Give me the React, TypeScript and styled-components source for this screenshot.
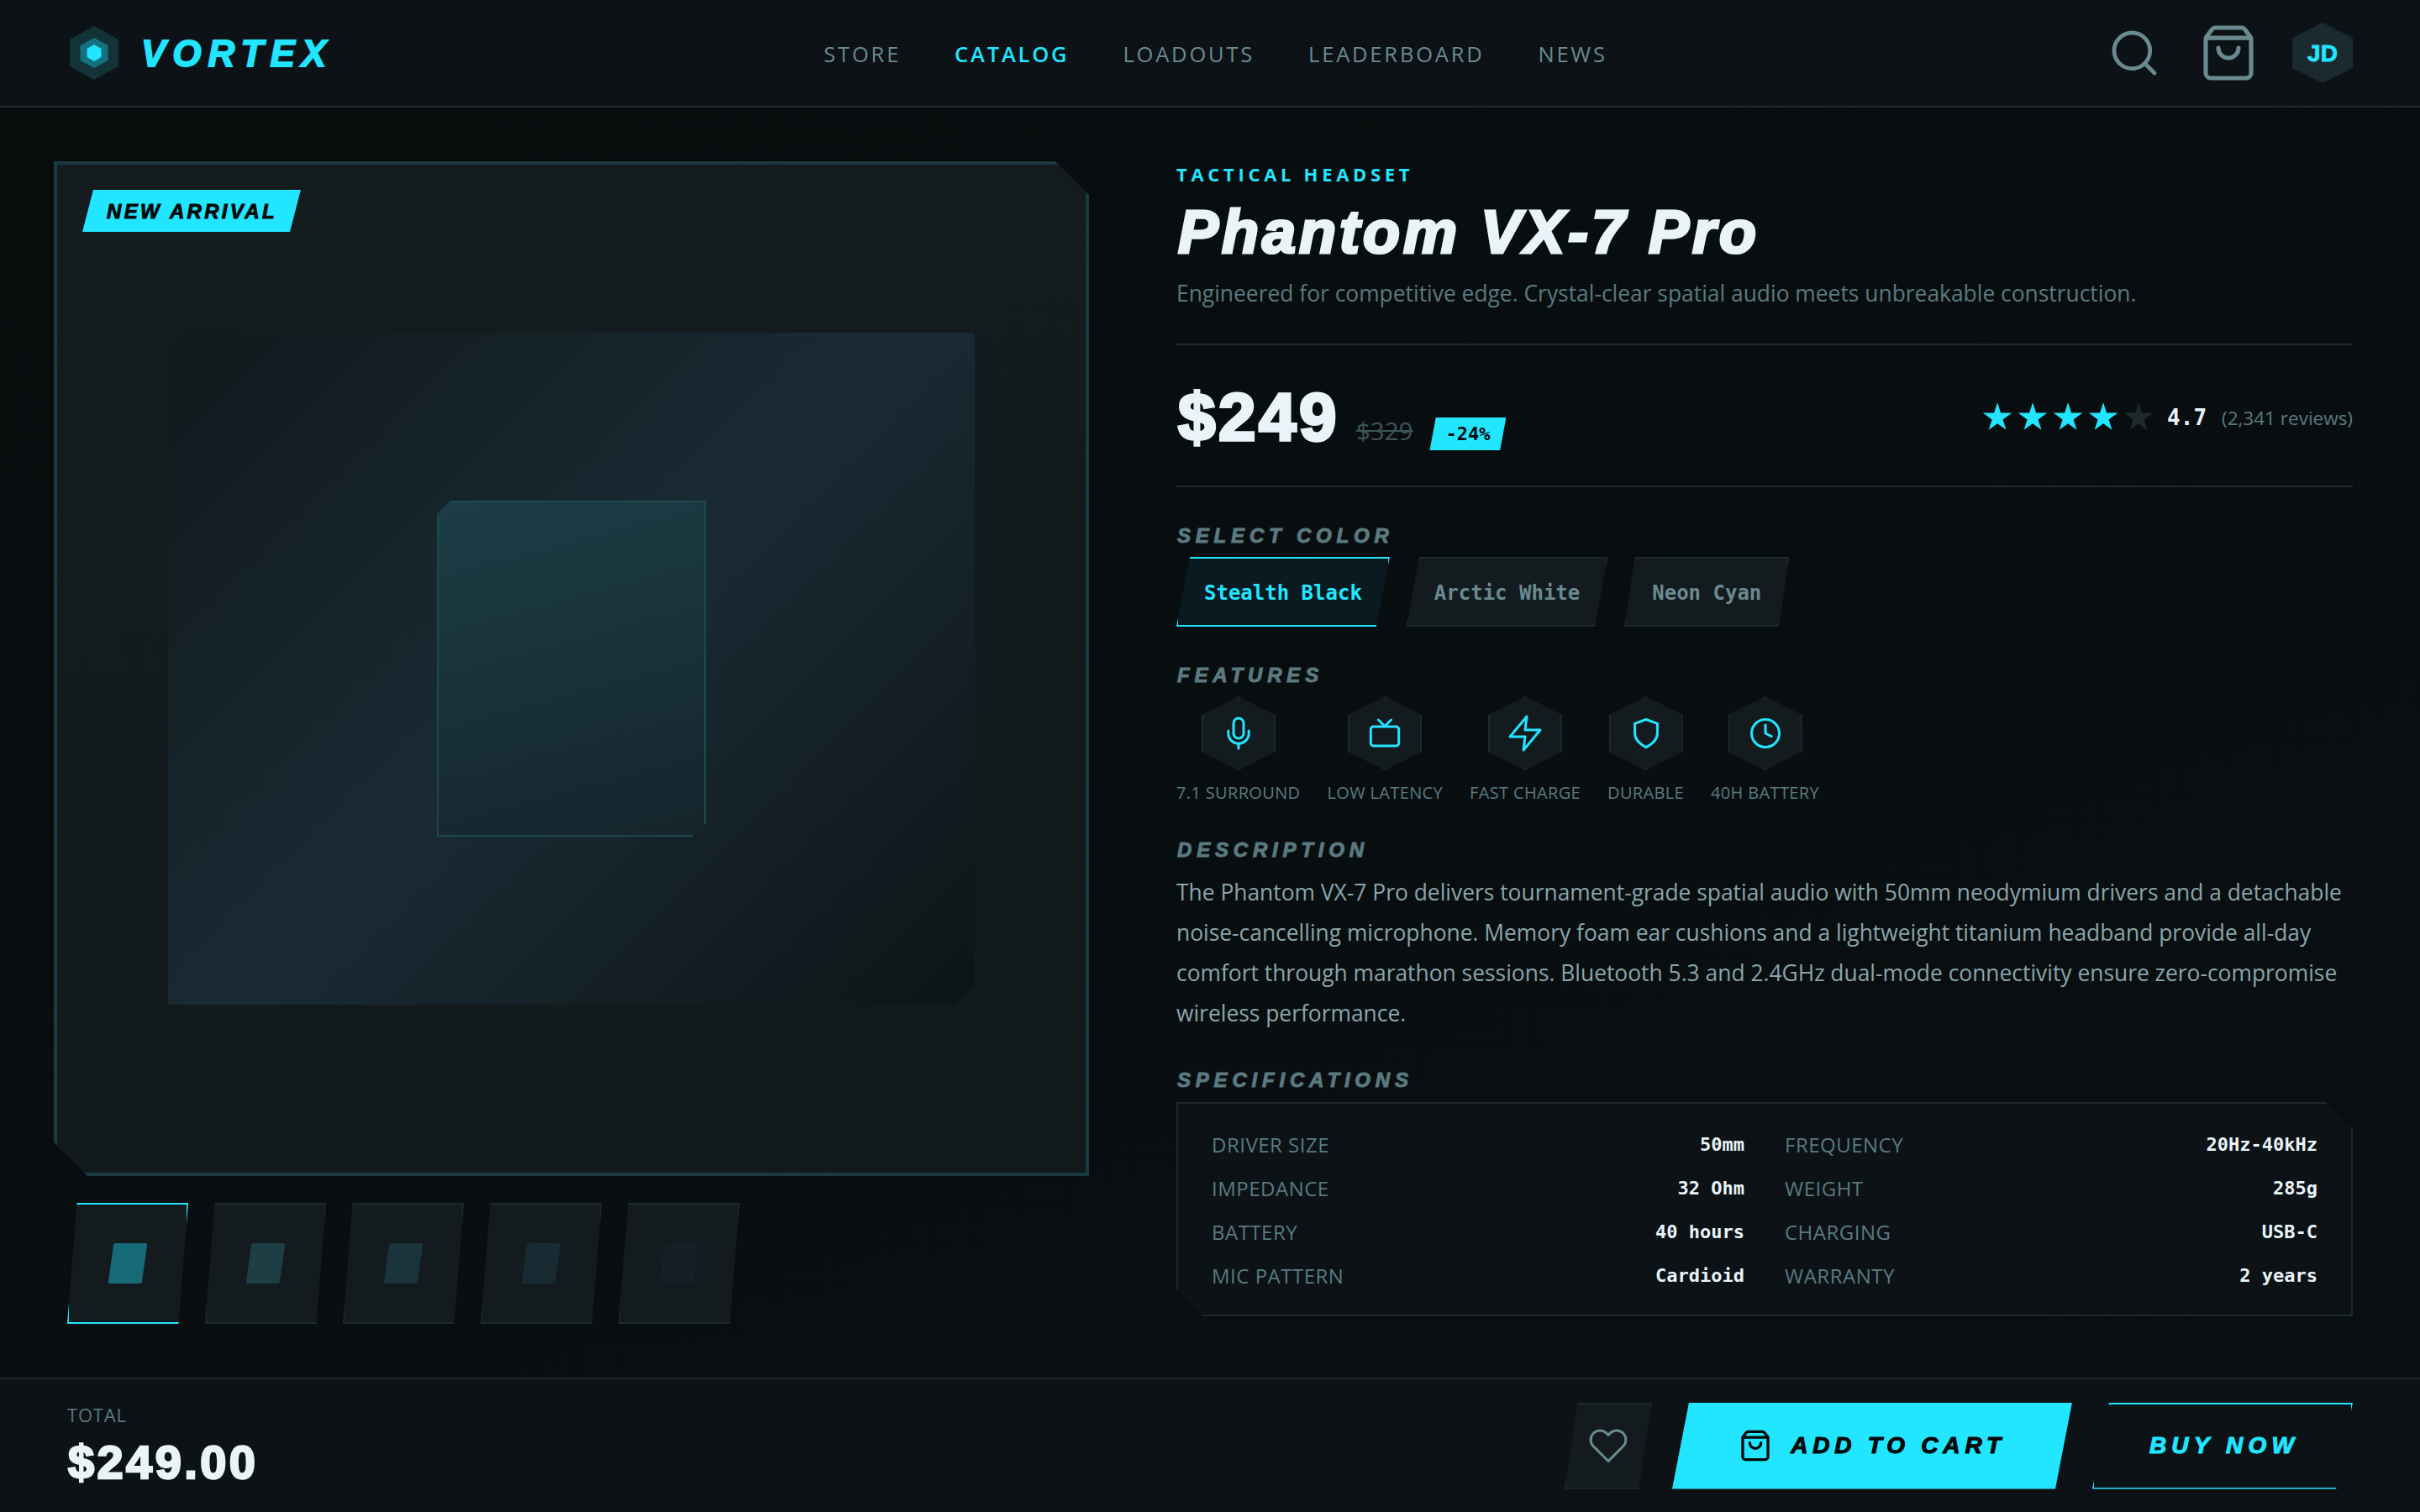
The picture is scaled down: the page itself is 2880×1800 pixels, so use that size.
import React from "react";
import styled, { createGlobalStyle } from "styled-components";
import { Search, ShoppingBag } from "lucide-react";

const CYAN = "#22e5ff";
const LINE = "#1c2a2e";
const MUTED = "#5a7a80";
const WHITE = "#e8f4f8";
const DISPLAY = `"Liberation Sans", Arial, sans-serif`;
const BODY = `"Open Sans", "Noto Sans", sans-serif`;
const MONO = `"DejaVu Sans Mono", "Liberation Mono", monospace`;

const Global = createGlobalStyle`
  * { box-sizing: border-box; }
  html, body { margin: 0; padding: 0; background: #080d0e; }
  body { font-family: ${BODY}; color: ${WHITE}; }
`;

const Page = styled.div`
  width: 2880px;
  height: 1800px;
  display: flex;
  flex-direction: column;
  overflow: hidden;
`;

const Header = styled.header`
  height: 128px;
  flex: none;
  display: flex;
  align-items: center;
  justify-content: space-between;
  padding: 0 80px;
  background: #0c1215;
  border-bottom: 2px solid ${LINE};
`;

const Brand = styled.div`
  display: flex;
  align-items: center;
  gap: 24px;
  width: 320px;
`;

const BrandName = styled.span`
  padding-top: 2px;
  font: italic 900 44px/1 ${DISPLAY};
  letter-spacing: 8px;
  -webkit-text-stroke: 0.04em currentColor;
  color: ${CYAN};
`;

const Nav = styled.nav`
  display: flex;
  gap: 64px;
  margin-right: 15px;
`;

const NavLink = styled.a<{ $active?: boolean }>`
  font-size: 25.5px;
  font-weight: ${(p) => (p.$active ? 600 : 500)};
  letter-spacing: 2.8px;
  line-height: 38px;
  padding-top: 2px;
  color: ${(p) => (p.$active ? CYAN : "#6a8a90")};
`;

const Actions = styled.div`
  display: flex;
  align-items: center;
  gap: 40px;
  color: #6a8a90;
`;

const SearchIcon = styled(Search)`
  margin-right: 4px;
`;

const Avatar = styled.div`
  width: 72px;
  height: 72px;
  padding-top: 2px;
  display: flex;
  align-items: center;
  justify-content: center;
  background: #1b2a2f;
  color: ${CYAN};
  font: 900 28px/1 ${DISPLAY};
  -webkit-text-stroke: 0.03em currentColor;
  clip-path: polygon(50% 0, 100% 25%, 100% 75%, 50% 100%, 0 75%, 0 25%);
`;

const Main = styled.main`
  flex: 1;
  min-height: 0;
  display: flex;
  gap: 104px;
  padding: 64px 80px 0 64px;
  background: linear-gradient(160deg, #070c0d, #0a1012);
`;

const Gallery = styled.section`
  width: 1232px;
  flex: none;
`;

const Stage = styled.div`
  position: relative;
  height: 1208px;
  display: flex;
  align-items: center;
  justify-content: center;
  background: linear-gradient(160deg, #141c1f, #12191b);
  border: 4px solid #1c3a42;
  clip-path: polygon(0 0, calc(100% - 40px) 0, 100% 40px, 100% 100%, 40px 100%, 0 calc(100% - 40px));
`;

const Badge = styled.span`
  position: absolute;
  top: 30px;
  left: 30px;
  height: 50px;
  padding: 2px 28px 0 29px;
  display: flex;
  align-items: center;
  background: ${CYAN};
  color: #07090a;
  font: italic 900 24px/1 ${DISPLAY};
  letter-spacing: 3.3px;
  -webkit-text-stroke: 0.04em currentColor;
  clip-path: polygon(5% 0, 100% 0, 95% 100%, 0 100%);
`;

const Shell = styled.div`
  width: 960px;
  height: 800px;
  display: flex;
  align-items: center;
  justify-content: center;
  background: linear-gradient(135deg, #10191c 0%, #1a2b34 50%, #0d1416 100%);
  clip-path: polygon(24px 0, 100% 0, 100% calc(100% - 24px), calc(100% - 24px) 100%, 0 100%, 0 24px);
`;

const Core = styled.div`
  width: 320px;
  height: 400px;
  background: linear-gradient(165deg, #1c3d46, #15252c);
  border: 2px solid #1c4850;
  clip-path: polygon(16px 0, 100% 0, 100% calc(100% - 16px), calc(100% - 16px) 100%, 0 100%, 0 16px);
`;

const ThumbRow = styled.div`
  display: flex;
  gap: 20px;
  margin-top: 32px;
  padding-left: 16px;
`;

const Thumb = styled.div<{ $active?: boolean }>`
  width: 144px;
  height: 144px;
  display: flex;
  align-items: center;
  justify-content: center;
  background: #141b1e;
  border: 2px solid ${(p) => (p.$active ? CYAN : LINE)};
  clip-path: polygon(8% 0, 100% 0, 92% 100%, 0 100%);
`;

const ThumbShape = styled.div<{ $tone: string }>`
  width: 40px;
  height: 48px;
  border-radius: 2px;
  background: ${(p) => p.$tone};
  transform: skewX(-8deg);
`;

const Details = styled.section`
  flex: 1;
  min-width: 0;
`;

const Intro = styled.div`
  padding-bottom: 40px;
  border-bottom: 2px solid ${LINE};
`;

const Category = styled.div`
  font-size: 22px;
  font-weight: 700;
  line-height: 30px;
  letter-spacing: 4.7px;
  color: ${CYAN};
`;

const Title = styled.h1`
  margin: 14px 0 0;
  padding-left: 2px;
  font: italic 900 72px/80px ${DISPLAY};
  letter-spacing: 4px;
  -webkit-text-stroke: 0.045em currentColor;
  color: ${WHITE};
`;

const Subtitle = styled.p`
  margin: 13px 0 0;
  font-size: 26.4px;
  line-height: 40px;
  color: ${MUTED};
`;

const PriceRow = styled.div`
  display: flex;
  align-items: center;
  justify-content: space-between;
  height: 169px;
  padding-top: 5px;
  border-bottom: 2px solid ${LINE};
`;

const PriceGroup = styled.div`
  display: flex;
  align-items: baseline;
  gap: 20px;
`;

const Price = styled.span`
  padding-left: 2px;
  font: 900 80px/1 ${DISPLAY};
  letter-spacing: 3.5px;
  -webkit-text-stroke: 0.045em currentColor;
  color: ${WHITE};
`;

const OldPrice = styled.span`
  font-size: 29.5px;
  text-decoration: line-through;
  color: #3e555a;
`;

const Discount = styled.span`
  padding: 0 19px;
  height: 39px;
  display: inline-flex;
  align-items: center;
  background: ${CYAN};
  color: #07090a;
  font: 700 22px/39px ${MONO};
  clip-path: polygon(8% 0, 100% 0, 92% 100%, 0 100%);
`;

const Rating = styled.div`
  display: flex;
  align-items: center;
`;

const Stars = styled.div`
  display: flex;
  gap: 6px;
`;

const Star = styled.i<{ $on: boolean }>`
  display: block;
  width: 36px;
  height: 36px;
  background: ${(p) => (p.$on ? CYAN : "#1c2a2e")};
  clip-path: polygon(50% 0, 61% 35%, 98% 35%, 68% 57%, 79% 91%, 50% 70%, 21% 91%, 32% 57%, 2% 35%, 39% 35%);
`;

const Score = styled.span`
  margin-left: 16px;
  font: 700 26px/1 ${MONO};
  color: ${WHITE};
`;

const Reviews = styled.span`
  margin-left: 18px;
  font-size: 22.5px;
  color: ${MUTED};
`;

const Label = styled.h2<{ $top: number }>`
  margin: ${(p) => p.$top}px 0 0;
  padding-left: 1px;
  font: italic 900 24px/30px ${DISPLAY};
  letter-spacing: 5.8px;
  -webkit-text-stroke: 0.04em currentColor;
  color: ${MUTED};
`;

const Colors = styled.div`
  display: flex;
  gap: 20px;
  margin-top: 10px;
`;

const ColorButton = styled.button<{ $active?: boolean }>`
  height: 83px;
  padding: 2px 31px 0;
  background: ${(p) => (p.$active ? "#0a1a20" : "#141b1e")};
  border: 2px solid ${(p) => (p.$active ? CYAN : LINE)};
  color: ${(p) => (p.$active ? CYAN : "#6a8a90")};
  font: 700 24px/1 ${MONO};
  clip-path: polygon(6.3% 0, 100% 0, 93.7% 100%, 0 100%);
`;

const FeatureRow = styled.div`
  display: flex;
  gap: 32px;
  margin-top: 10px;
`;

const Feature = styled.div`
  display: flex;
  flex-direction: column;
  align-items: center;
  gap: 13px;
`;

const FeatureHex = styled.div`
  width: 88px;
  height: 88px;
  display: flex;
  align-items: center;
  justify-content: center;
  background: #141b1e;
  border: 2px solid ${LINE};
  color: ${CYAN};
  clip-path: polygon(50% 0, 100% 25%, 100% 75%, 50% 100%, 0 75%, 0 25%);
`;

const FeatureLabel = styled.span`
  font-size: 20px;
  line-height: 28px;
  letter-spacing: 0.35px;
  color: ${MUTED};
`;

const Description = styled.p`
  margin: 11px 0 0;
  font-size: 26.4px;
  line-height: 48px;
  color: #8aa5aa;
`;

const SpecTable = styled.div`
  display: grid;
  grid-template-columns: 1fr 1fr;
  gap: 21px 48px;
  margin-top: 11px;
  padding: 33px 40px 31px;
  background: #0c1215;
  border: 2px solid ${LINE};
  clip-path: polygon(0 0, calc(100% - 32px) 0, 100% 32px, 100% 100%, 32px 100%, 0 calc(100% - 32px));
`;

const SpecRow = styled.div`
  display: flex;
  align-items: center;
  justify-content: space-between;
  height: 31px;
`;

const SpecName = styled.span`
  font-size: 24px;
  letter-spacing: 0.5px;
  color: ${MUTED};
`;

const SpecValue = styled.span`
  font: 700 22px/1 ${MONO};
  color: ${WHITE};
`;

const Footer = styled.footer`
  height: 160px;
  flex: none;
  display: flex;
  align-items: center;
  justify-content: space-between;
  padding: 0 80px;
  background: #0c1215;
  border-top: 2px solid ${LINE};
`;

const TotalLabel = styled.div`
  font-size: 22px;
  line-height: 30px;
  letter-spacing: 0.8px;
  color: ${MUTED};
`;

const TotalValue = styled.div`
  margin-top: 10px;
  padding-left: 1px;
  font: 900 56px/64px ${DISPLAY};
  letter-spacing: 3.4px;
  -webkit-text-stroke: 0.045em currentColor;
  color: ${WHITE};
`;

const Buy = styled.div`
  display: flex;
  align-items: center;
  gap: 24px;
`;

const WishButton = styled.button`
  width: 104px;
  height: 103px;
  display: flex;
  align-items: center;
  justify-content: center;
  background: #141b1e;
  border: 2px solid ${LINE};
  color: #6a8a90;
  clip-path: polygon(15% 0, 100% 0, 85% 100%, 0 100%);
`;

const CartButton = styled.button`
  width: 476px;
  height: 103px;
  display: flex;
  align-items: center;
  justify-content: center;
  gap: 22px;
  border: 0;
  background: ${CYAN};
  color: #07090a;
  font: italic 900 28px/1 ${DISPLAY};
  letter-spacing: 5.8px;
  -webkit-text-stroke: 0.04em currentColor;
  clip-path: polygon(4.2% 0, 100% 0, 95.8% 100%, 0 100%);
`;

const NowButton = styled.button`
  width: 310px;
  height: 103px;
  padding-left: 10px;
  background: transparent;
  border: 2px solid ${CYAN};
  color: ${CYAN};
  font: italic 900 28px/1 ${DISPLAY};
  letter-spacing: 6.2px;
  -webkit-text-stroke: 0.04em currentColor;
  clip-path: polygon(6.4% 0, 100% 0, 93.6% 100%, 0 100%);
`;

const hexRing = (pts: number[]) => pts.join(" ");

const Logo = () => (
  <svg width="64" height="64" viewBox="0 0 64 64">
    <polygon points={hexRing([32, 0, 61, 16, 61, 48, 32, 64, 3, 48, 3, 16])} fill="#123338" />
    <polygon points={hexRing([32, 14, 48.5, 23, 48.5, 41, 32, 50, 15.5, 41, 15.5, 23])} fill="#157080" />
    <polygon points={hexRing([32, 22, 40.5, 27, 40.5, 37, 32, 42, 23.5, 37, 23.5, 27])} fill={CYAN} />
  </svg>
);

const Line = ({ children, size = 48, width = 1.5 }: { children: React.ReactNode; size?: number; width?: number }) => (
  <svg
    width={size}
    height={size}
    viewBox="0 0 24 24"
    fill="none"
    stroke="currentColor"
    strokeWidth={width}
    strokeLinecap="round"
    strokeLinejoin="round"
  >
    {children}
  </svg>
);

const features: [string, React.ReactNode][] = [
  [
    "7.1 SURROUND",
    <>
      <rect x="9" y="3" width="6" height="12" rx="3" />
      <path d="M5.9 10.5V12a6.1 6.1 0 0 0 12.2 0v-1.5" />
      <path d="M12 18v3" />
    </>,
  ],
  [
    "LOW LATENCY",
    <>
      <rect x="3.65" y="8" width="16.7" height="11.5" rx="1.6" />
      <path d="M8.2 4 12 7.75 15.8 4" />
    </>,
  ],
  ["FAST CHARGE", <path d="M13 2 3 14h9l-1 8 10-12h-9l1-8z" />],
  ["DURABLE", <path d="M12 3.75 18.7 6.2V12c0 3.8-3 6.4-6.7 8.3-3.7-1.9-6.7-4.5-6.7-8.3V6.2Z" />],
  [
    "40H BATTERY",
    <>
      <circle cx="12" cy="12" r="8.25" />
      <path d="M12 7v5l3.6 1.8" />
    </>,
  ],
];

const specs = [
  ["DRIVER SIZE", "50mm"],
  ["FREQUENCY", "20Hz-40kHz"],
  ["IMPEDANCE", "32 Ohm"],
  ["WEIGHT", "285g"],
  ["BATTERY", "40 hours"],
  ["CHARGING", "USB-C"],
  ["MIC PATTERN", "Cardioid"],
  ["WARRANTY", "2 years"],
];

const thumbTones = ["#176b78", "#1c3e44", "#1b343c", "#182b32", "#141f27"];

export default function App() {
  return (
    <Page>
      <Global />
      <Header>
        <Brand>
          <Logo />
          <BrandName>VORTEX</BrandName>
        </Brand>
        <Nav>
          <NavLink>STORE</NavLink>
          <NavLink $active>CATALOG</NavLink>
          <NavLink>LOADOUTS</NavLink>
          <NavLink>LEADERBOARD</NavLink>
          <NavLink>NEWS</NavLink>
        </Nav>
        <Actions>
          <SearchIcon size={64} strokeWidth={1.8} />
          <ShoppingBag size={72} strokeWidth={1.7} />
          <Avatar>JD</Avatar>
        </Actions>
      </Header>
      <Main>
        <Gallery>
          <Stage>
            <Badge>NEW ARRIVAL</Badge>
            <Shell>
              <Core />
            </Shell>
          </Stage>
          <ThumbRow>
            {thumbTones.map((tone, i) => (
              <Thumb key={tone} $active={i === 0}>
                <ThumbShape $tone={tone} />
              </Thumb>
            ))}
          </ThumbRow>
        </Gallery>
        <Details>
          <Intro>
            <Category>TACTICAL HEADSET</Category>
            <Title>Phantom VX-7 Pro</Title>
            <Subtitle>Engineered for competitive edge. Crystal-clear spatial audio meets unbreakable construction.</Subtitle>
          </Intro>
          <PriceRow>
            <PriceGroup>
              <Price>$249</Price>
              <OldPrice>$329</OldPrice>
              <Discount>-24%</Discount>
            </PriceGroup>
            <Rating>
              <Stars>
                {[1, 2, 3, 4, 5].map((n) => (
                  <Star key={n} $on={n < 5} />
                ))}
              </Stars>
              <Score>4.7</Score>
              <Reviews>(2,341 reviews)</Reviews>
            </Rating>
          </PriceRow>
          <Label $top={43}>SELECT COLOR</Label>
          <Colors>
            <ColorButton $active>Stealth Black</ColorButton>
            <ColorButton>Arctic White</ColorButton>
            <ColorButton>Neon Cyan</ColorButton>
          </Colors>
          <Label $top={43}>FEATURES</Label>
          <FeatureRow>
            {features.map(([name, icon]) => (
              <Feature key={name}>
                <FeatureHex>
                  <Line>{icon}</Line>
                </FeatureHex>
                <FeatureLabel>{name}</FeatureLabel>
              </Feature>
            ))}
          </FeatureRow>
          <Label $top={39}>DESCRIPTION</Label>
          <Description>
            The Phantom VX-7 Pro delivers tournament-grade spatial audio with 50mm neodymium drivers and a detachable
            noise-cancelling microphone. Memory foam ear cushions and a lightweight titanium headband provide all-day
            comfort through marathon sessions. Bluetooth 5.3 and 2.4GHz dual-mode connectivity ensure zero-compromise
            wireless performance.
          </Description>
          <Label $top={41}>SPECIFICATIONS</Label>
          <SpecTable>
            {specs.map(([name, value]) => (
              <SpecRow key={name}>
                <SpecName>{name}</SpecName>
                <SpecValue>{value}</SpecValue>
              </SpecRow>
            ))}
          </SpecTable>
        </Details>
      </Main>
      <Footer>
        <div>
          <TotalLabel>TOTAL</TotalLabel>
          <TotalValue>$249.00</TotalValue>
        </div>
        <Buy>
          <WishButton>
            <Line size={48} width={1.5}>
              <path d="M20.84 4.61a5.5 5.5 0 0 0-7.78 0L12 5.67l-1.06-1.06a5.5 5.5 0 0 0-7.78 7.78l1.06 1.06L12 21.23l7.78-7.78 1.06-1.06a5.5 5.5 0 0 0 0-7.78z" />
            </Line>
          </WishButton>
          <CartButton>
            <ShoppingBag size={40} strokeWidth={2} />
            ADD TO CART
          </CartButton>
          <NowButton>BUY NOW</NowButton>
        </Buy>
      </Footer>
    </Page>
  );
}
